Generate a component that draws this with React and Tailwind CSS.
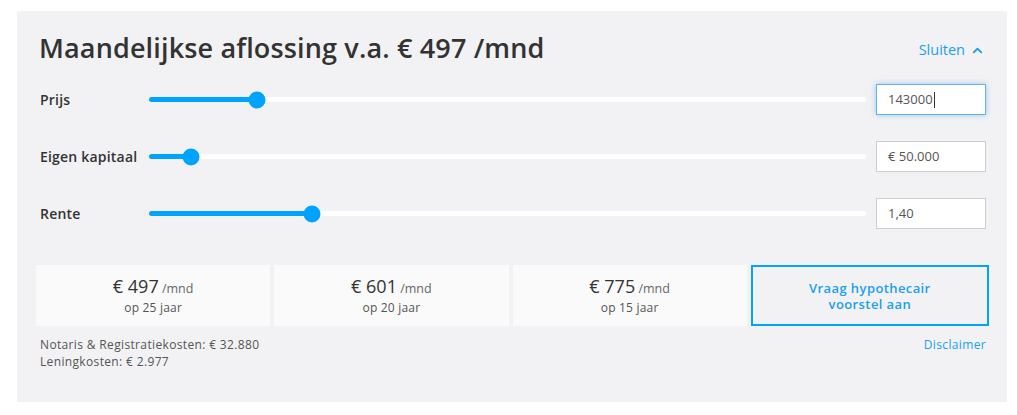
import React from "react";
import { ChevronUp } from "lucide-react";

const rows = [
  { label: "Prijs", frac: 0.151, value: "143000", focus: true },
  { label: "Eigen kapitaal", frac: 0.0587, value: "€ 50.000" },
  { label: "Rente", frac: 0.228, value: "1,40" },
];

const cards = [
  { amt: "€ 497", yrs: "op 25 jaar" },
  { amt: "€ 601", yrs: "op 20 jaar" },
  { amt: "€ 775", yrs: "op 15 jaar" },
];

function Slider({ frac }) {
  return (
    <div className="relative flex-1 h-[5px] rounded-full bg-white">
      <div className="absolute left-0 top-0 h-[5px] rounded-full bg-[#00a3ff]" style={{ width: `${frac * 100}%` }} />
      <div
        className="absolute top-1/2 h-[17px] w-[17px] -translate-x-1/2 -translate-y-1/2 rounded-full bg-[#00a3ff]"
        style={{ left: `${frac * 100}%` }}
      />
    </div>
  );
}

export default function App() {
  return (
    <div className="w-[1017px] h-[415px] bg-white pt-[11px] pl-[17px]" style={{ fontFamily: '"Open Sans", "Liberation Sans", sans-serif' }}>
      <div className="w-[990px] h-[391px] bg-[#f2f2f4] pt-[19px]">
        <div className="flex items-center justify-between pl-[22px] pr-[22px] h-[36px]">
          <h1 className="text-[27px] font-semibold text-[#333] leading-[36px] tracking-[0.15px]">
            Maandelijkse aflossing v.a. € 497 /mnd
          </h1>
          <div className="flex items-center gap-[5px] text-[14.5px] text-[#1a9ff0] mt-[4px]">
            <span>Sluiten</span>
            <ChevronUp size={15} strokeWidth={3} />
          </div>
        </div>

        <div className="mt-[18px] flex flex-col gap-[26px] pl-[23px] pr-[21px]">
          {rows.map((r) => (
            <div key={r.label} className="flex items-center h-[31px]">
              <div className="w-[109px] text-[14px] font-semibold text-[#333] tracking-[0.2px]">{r.label}</div>
              <Slider frac={r.frac} />
              <div
                className={
                  "ml-[10px] w-[110px] h-[31px] bg-white flex items-center px-[11px] text-[13px] text-[#555] " +
                  (r.focus
                    ? "border border-[#66afe9] shadow-[0_0_6px_rgba(102,175,233,0.6)]"
                    : "border border-[#cccccc]")
                }
              >
                {r.value}
                {r.focus && <span className="ml-[1px] inline-block w-px h-[16px] bg-[#333]" />}
              </div>
            </div>
          ))}
        </div>

        <div className="mt-[36px] flex gap-[4px] pl-[19px] pr-[18px]">
          {cards.map((c) => (
            <div key={c.amt} className="flex-1 h-[61px] bg-[#fafafa] flex flex-col items-center justify-center">
              <div className="leading-[22px] text-[#333]">
                <span className="text-[18px]">{c.amt}</span>
                <span className="text-[12.5px] text-[#666]"> /mnd</span>
              </div>
              <div className="text-[12px] text-[#555] leading-[16px] tracking-[0.2px]">{c.yrs}</div>
            </div>
          ))}
          <div className="flex-1 h-[61px] border-[2px] border-[#00a6f5] flex items-center justify-center text-center text-[13px] font-semibold leading-[16px] tracking-[0.4px] text-[#1a9ff0]">
            Vraag hypothecair
            <br />
            voorstel aan
          </div>
        </div>

        <div className="mt-[10px] flex justify-between pl-[23px] pr-[21px] text-[12px] leading-[17px] tracking-[0.35px]">
          <div className="text-[#555]">
            <div>Notaris &amp; Registratiekosten: € 32.880</div>
            <div>Leningkosten: € 2.977</div>
          </div>
          <div className="text-[#1a9ff0]">Disclaimer</div>
        </div>
      </div>
    </div>
  );
}
